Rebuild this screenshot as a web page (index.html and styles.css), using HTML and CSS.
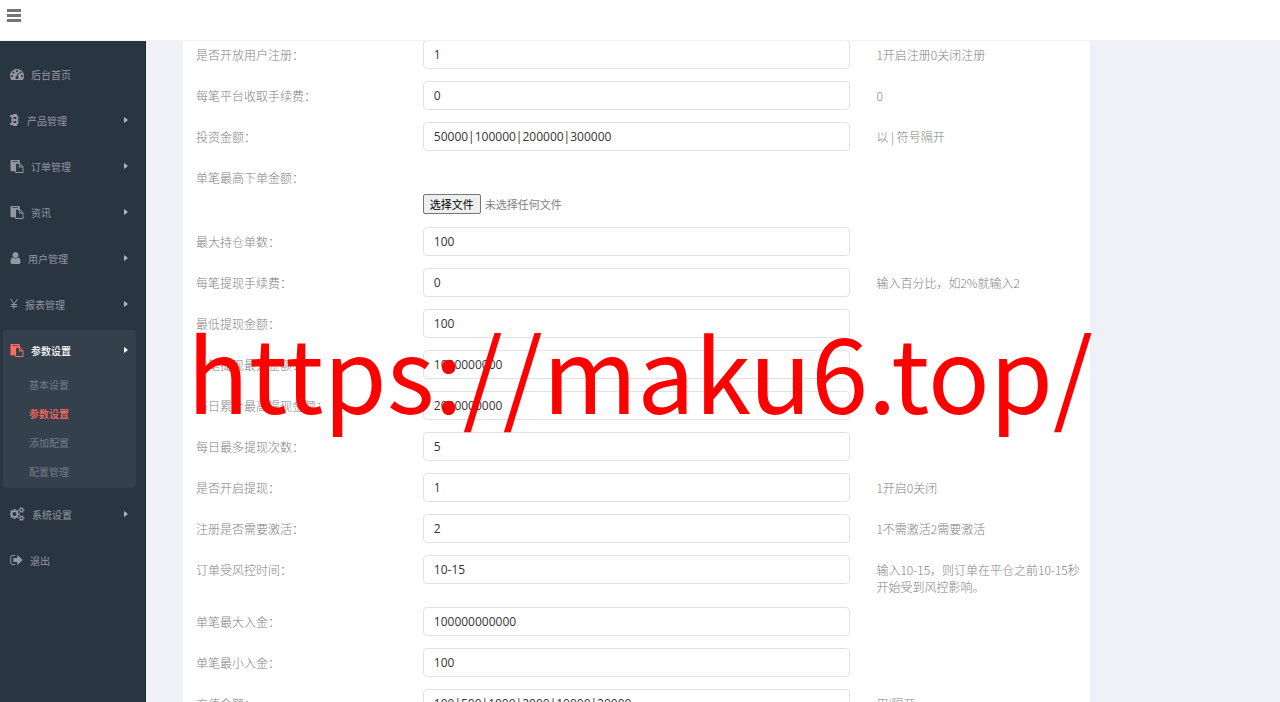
FILE: index.html
```html
<!DOCTYPE html>
<html lang="zh-CN">
<head>
    <meta charset="UTF-8">
    <meta name="viewport" content="width=device-width, initial-scale=1.0">
    <title>参数设置</title>
    <link rel="stylesheet" href="styles.css">
</head>
<body>
    <!-- 图标 -->
    <svg class="sprite" width="0" height="0">
        <symbol id="i-paste" viewBox="0 0 1792 1792"><path d="M768 1664h896v-640h-416q-40 0-68-28t-28-68v-416h-384v1152zm256-1440v-64q0-13-9.5-22.5t-22.5-9.5h-704q-13 0-22.5 9.5t-9.5 22.5v64q0 13 9.5 22.5t22.5 9.5h704q13 0 22.5-9.5t9.5-22.5zm256 672h299l-299-299v299zm512 128v672q0 40-28 68t-68 28h-960q-40 0-68-28t-28-68v-160h-544q-40 0-68-28t-28-68v-1344q0-40 28-68t68-28h1088q40 0 68 28t28 68v328q21 13 36 28l408 408q28 28 48 76t20 88z"/></symbol>
    </svg>

    <header class="header">
        <button class="toggle" type="button" aria-label="菜单">
            <svg width="14" height="13" viewBox="0 0 14 13"><path d="M0 0h14v3H0zM0 5h14v3H0zM0 10h14v3H0z"/></svg>
        </button>
    </header>

    <div class="container">
        <aside class="sidebar">
            <ul class="menu">
                <li>
                    <a class="item" href="#">
                        <svg class="icon" width="14" height="14" viewBox="0 0 1792 1792"><path d="M384 1152q0-53-37.5-90.5t-90.5-37.5-90.5 37.5-37.5 90.5 37.5 90.5 90.5 37.5 90.5-37.5 37.5-90.5zm192-448q0-53-37.5-90.5t-90.5-37.5-90.5 37.5-37.5 90.5 37.5 90.5 90.5 37.5 90.5-37.5 37.5-90.5zm428 481l101-382q6-26-7.5-48.5t-38.5-29.5-48 6.5-30 39.5l-101 382q-60 5-107 43.5t-63 98.5q-20 77 20 146t117 89 146-20 89-117q16-60-6-117t-72-91zm660-33q0-53-37.5-90.5t-90.5-37.5-90.5 37.5-37.5 90.5 37.5 90.5 90.5 37.5 90.5-37.5 37.5-90.5zm-640-640q0-53-37.5-90.5t-90.5-37.5-90.5 37.5-37.5 90.5 37.5 90.5 90.5 37.5 90.5-37.5 37.5-90.5zm448 192q0-53-37.5-90.5t-90.5-37.5-90.5 37.5-37.5 90.5 37.5 90.5 90.5 37.5 90.5-37.5 37.5-90.5zm320 448q0 261-141 483-19 29-54 29h-1402q-35 0-54-29-141-221-141-483 0-182 71-348t191-286 286-191 348-71 348 71 286 191 191 286 71 348z"/></svg>
                        <span>后台首页</span>
                    </a>
                </li>
                <li>
                    <a class="item" href="#">
                        <svg class="icon line" width="10" height="12" viewBox="0 0 10 12"><path d="M0 2h5.5a2 2 0 0 1 0 4H3M5.5 6a2 2 0 0 1 0 4H0M2.500 2v8M4 0v2M6 0v2M4 10v2M6 10v2"/></svg>
                        <span>产品管理</span>
                        <i class="arrow"></i>
                    </a>
                </li>
                <li>
                    <a class="item" href="#">
                        <svg class="icon" width="14" height="13"><use href="#i-paste"/></svg>
                        <span>订单管理</span>
                        <i class="arrow"></i>
                    </a>
                </li>
                <li>
                    <a class="item" href="#">
                        <svg class="icon" width="14" height="13"><use href="#i-paste"/></svg>
                        <span>资讯</span>
                        <i class="arrow"></i>
                    </a>
                </li>
                <li>
                    <a class="item" href="#">
                        <svg class="icon" width="11" height="14" viewBox="192 0 1408 1792"><path d="M1536 1399q0 109-62.500 187t-150.500 78h-854q-88 0-150.500-78t-62.500-187q0-85 8.500-160.500t31.500-152 58.500-131 94-89 134.500-34.500q131 128 313 128t313-128q76 0 134.500 34.500t94 89 58.500 131 31.500 152 8.500 160.500zm-256-887q0 159-112.500 271.500t-271.500 112.500-271.500-112.500-112.500-271.500 112.500-271.500 271.500-112.500 271.500 112.500 112.500 271.500z"/></svg>
                        <span>用户管理</span>
                        <i class="arrow"></i>
                    </a>
                </li>
                <li>
                    <a class="item" href="#">
                        <svg class="icon line yen" width="8" height="10" viewBox="0 0 8 10"><path d="M.6 0L4 5 7.400 0M4 5v5M1 5.500h6M1 7.500h6"/></svg>
                        <span>报表管理</span>
                        <i class="arrow"></i>
                    </a>
                </li>
                <li class="active">
                    <a class="item" href="#">
                        <svg class="icon" width="14" height="13"><use href="#i-paste"/></svg>
                        <span>参数设置</span>
                        <i class="arrow"></i>
                    </a>
                    <ul class="sub">
                        <li><a href="#">基本设置</a></li>
                        <li><a class="current" href="#">参数设置</a></li>
                        <li><a href="#">添加配置</a></li>
                        <li><a href="#">配置管理</a></li>
                    </ul>
                </li>
                <li>
                    <a class="item" href="#">
                        <svg class="icon" width="15" height="14" viewBox="0 0 1920 1792"><path d="M832 896q0-106-75-181t-181-75-181 75-75 181 75 181 181 75 181-75 75-181zm768 512q0-52-38-90t-90-38-90 38-38 90q0 53 37.500 90.500t90.500 37.500 90.500-37.500 37.500-90.500zm0-1024q0-52-38-90t-90-38-90 38-38 90q0 53 37.500 90.500t90.500 37.500 90.500-37.500 37.500-90.500zm-384 421v185q0 10-7 19.500t-16 10.500l-155 24q-11 35-32 76 34 48 90 115 7 11 7 20 0 12-7 19-23 30-82.500 89.500t-78.500 59.500q-11 0-21-7l-115-90q-37 19-77 31-11 108-23 155-7 24-30 24h-186q-11 0-20-7.500t-10-17.500l-23-153q-34-10-75-31l-118 89q-7 7-20 7-11 0-21-8-144-133-144-160 0-9 7-19 10-14 41-53t47-61q-23-44-35-82l-152-24q-10-1-17-9.500t-7-19.500v-185q0-10 7-19.500t16-10.500l155-24q11-35 32-76-34-48-90-115-7-11-7-20 0-12 7-20 22-30 82-89t79-59q11 0 21 7l115 90q34-18 77-32 11-108 23-154 7-24 30-24h186q11 0 20 7.500t10 17.500l23 153q34 10 75 31l118-89q8-7 20-7 11 0 21 8 144 133 144 160 0 8-7 19-12 16-42 54t-45 60q23 48 34 82l152 23q10 2 17 10.500t7 19.500zm640 533v140q0 16-149 31-12 27-30 52 51 113 51 138 0 4-4 7-122 71-124 71-8 0-46-47t-52-68q-20 2-30 2t-30-2q-14 21-52 68t-46 47q-2 0-124-71-4-3-4-7 0-25 51-138-18-25-30-52-149-15-149-31v-140q0-16 149-31 13-29 30-52-51-113-51-138 0-4 4-7 4-2 35-20t59-34 30-16q8 0 46 46.500t52 67.500q20-2 30-2t30 2q51-71 92-112l6-2q4 0 124 70 4 3 4 7 0 25-51 138 17 23 30 52 149 15 149 31zm0-1024v140q0 16-149 31-12 27-30 52 51 113 51 138 0 4-4 7-122 71-124 71-8 0-46-47t-52-68q-20 2-30 2t-30-2q-14 21-52 68t-46 47q-2 0-124-71-4-3-4-7 0-25 51-138-18-25-30-52-149-15-149-31v-140q0-16 149-31 13-29 30-52-51-113-51-138 0-4 4-7 4-2 35-20t59-34 30-16q8 0 46 46.500t52 67.500q20-2 30-2t30 2q51-71 92-112l6-2q4 0 124 70 4 3 4 7 0 25-51 138 17 23 30 52 149 15 149 31z"/></svg>
                        <span>系统设置</span>
                        <i class="arrow"></i>
                    </a>
                </li>
                <li>
                    <a class="item" href="#">
                        <svg class="icon" width="13" height="14" viewBox="64 0 1600 1792"><path d="M704 1440q0 4 1 20t.5 26.500-3 23.500-10 19.500-20.500 6.500h-320q-119 0-203.500-84.500t-84.500-203.500v-704q0-119 84.500-203.500t203.500-84.500h320q13 0 22.500 9.500t9.500 22.500q0 4 1 20t.5 26.500-3 23.500-10 19.500-20.500 6.500h-320q-66 0-113 47t-47 113v704q0 66 47 113t113 47h312l11.500 1 11.500 3 8 5.500 7 9 2 13.500zm928-544q0 26-19 45l-544 544q-19 19-45 19t-45-19-19-45v-288h-448q-26 0-45-19t-19-45v-384q0-26 19-45t45-19h448v-288q0-26 19-45t45-19 45 19l544 544q19 19 19 45z"/></svg>
                        <span>退出</span>
                    </a>
                </li>
            </ul>
        </aside>

        <main class="main">
            <form class="panel">
                <div class="row">
                    <label for="reg">是否开放用户注册：</label>
                    <div class="field"><input type="text" id="reg" value="1"></div>
                    <p class="hint">1开启注册0关闭注册</p>
                </div>
                <div class="row">
                    <label for="fee">每笔平台收取手续费：</label>
                    <div class="field"><input type="text" id="fee" value="0"></div>
                    <p class="hint">0</p>
                </div>
                <div class="row">
                    <label for="invest">投资金额：</label>
                    <div class="field"><input type="text" id="invest" value="50000|100000|200000|300000"></div>
                    <p class="hint">以 | 符号隔开</p>
                </div>
                <div class="row">
                    <label for="file">单笔最高下单金额：</label>
                    <div class="field upload">
                        <input type="file" id="file" hidden>
                        <button type="button" class="file-btn" onclick="document.getElementById('file').click()">选择文件</button>
                        <span>未选择任何文件</span>
                    </div>
                </div>
                <div class="row">
                    <label for="hold">最大持仓单数：</label>
                    <div class="field"><input type="text" id="hold" value="100"></div>
                </div>
                <div class="row">
                    <label for="cash-fee">每笔提现手续费：</label>
                    <div class="field"><input type="text" id="cash-fee" value="0"></div>
                    <p class="hint">输入百分比，如2%就输入2</p>
                </div>
                <div class="row">
                    <label for="cash-min">最低提现金额：</label>
                    <div class="field"><input type="text" id="cash-min" value="100"></div>
                </div>
                <div class="row">
                    <label for="cash-max">单笔提现最大金额：</label>
                    <div class="field"><input type="text" id="cash-max" value="1000000000"></div>
                </div>
                <div class="row">
                    <label for="day-max">每日累计最高提现金额：</label>
                    <div class="field"><input type="text" id="day-max" value="2000000000"></div>
                </div>
                <div class="row">
                    <label for="day-num">每日最多提现次数：</label>
                    <div class="field"><input type="text" id="day-num" value="5"></div>
                </div>
                <div class="row">
                    <label for="cash-open">是否开启提现：</label>
                    <div class="field"><input type="text" id="cash-open" value="1"></div>
                    <p class="hint">1开启0关闭</p>
                </div>
                <div class="row">
                    <label for="activate">注册是否需要激活：</label>
                    <div class="field"><input type="text" id="activate" value="2"></div>
                    <p class="hint">1不需激活2需要激活</p>
                </div>
                <div class="row">
                    <label for="risk">订单受风控时间：</label>
                    <div class="field"><input type="text" id="risk" value="10-15"></div>
                    <p class="hint">输入10-15，则订单在平仓之前10-15秒开始受到风控影响。</p>
                </div>
                <div class="row">
                    <label for="in-max">单笔最大入金：</label>
                    <div class="field"><input type="text" id="in-max" value="100000000000"></div>
                </div>
                <div class="row">
                    <label for="in-min">单笔最小入金：</label>
                    <div class="field"><input type="text" id="in-min" value="100"></div>
                </div>
                <div class="row">
                    <label for="recharge">充值金额：</label>
                    <div class="field"><input type="text" id="recharge" value="100|500|1000|2000|10000|20000"></div>
                    <p class="hint">用|隔开</p>
                </div>
            </form>
        </main>
    </div>

    <div class="watermark">https://maku6.top/</div>
</body>
</html>
```

FILE: styles.css
```css
* {
    box-sizing: border-box;
}

body {
    height: 100vh;
    margin: 0;
    padding-top: 40px;
    overflow: hidden;
    background: #f0f1f7;
    color: #808085;
    font-family: "Noto Sans CJK SC", sans-serif;
    font-size: 12px;
    font-weight: 300;
    line-height: 17px;
}

ul {
    margin: 0;
    padding: 0;
    list-style: none;
}

a {
    color: inherit;
    text-decoration: none;
}

.sprite {
    position: absolute;
}

/* 顶部 */
.header {
    position: fixed;
    top: 0;
    left: 0;
    right: 0;
    z-index: 2;
    height: 41px;
    padding: 9px 7px;
    background: #fff;
    border-bottom: 1px solid #f1f2f7;
}

.toggle {
    display: block;
    padding: 0;
    border: 0;
    background: none;
    cursor: pointer;
}

.toggle svg {
    display: block;
    fill: #757575;
}

/* 左侧菜单 */
.container {
    display: flex;
    height: 100%;
}

.sidebar {
    flex: none;
    width: 146px;
    padding: 14px 9px 0 3px;
    background: #2a3542;
    border-right: 1px solid #1f2738;
    color: #9297a0;
    font-size: 10px;
    font-weight: 400;
}

.menu {
    display: flex;
    flex-direction: column;
    gap: 6px;
}

.item {
    display: flex;
    align-items: center;
    gap: 7px;
    height: 40px;
    padding: 0 8px 0 7px;
}

.icon {
    flex: none;
    fill: currentColor;
}

.line {
    fill: none;
    stroke: currentColor;
    stroke-width: 2;
}

.yen {
    stroke-width: 1;
}

.arrow {
    margin-left: auto;
    border: 3px solid transparent;
    border-left: 4px solid #b4b8be;
    border-right: 0;
}

.active {
    border-radius: 4px;
    background: #35404d;
}

.active .item {
    color: #fff;
    font-weight: 500;
}

.active .icon {
    color: #ff6c60;
}

.active .arrow {
    border-left-color: #fff;
}

.sub {
    padding-bottom: 2px;
    color: #737b85;
}

.sub a {
    display: block;
    padding: 0 26px;
    line-height: 29px;
}

.sub .current {
    color: #ff6c60;
    font-weight: 500;
}

/* 表单 */
.main {
    flex: 1;
    overflow: hidden;
}

.panel {
    width: 80%;
    margin-left: 37px;
    background: #fff;
}

.row {
    display: grid;
    grid-template-columns: 3fr 6fr 3fr;
    align-items: start;
    padding-bottom: 12px;
}

.row label,
.row .hint {
    margin: 0;
    padding: 6px 0 0 13px;
}

.field {
    padding: 0 13px;
}

.field input {
    display: block;
    width: 100%;
    height: 29px;
    padding: 0 10px;
    border: 1px solid #e2e2e4;
    border-radius: 4px;
    background: #fff;
    color: #333;
    font-family: "Open Sans", "Noto Sans CJK SC", sans-serif;
    font-size: 12px;
}

.field input[hidden] {
    display: none;
}

.upload {
    display: flex;
    align-items: center;
    gap: 4px;
    padding-top: 31px;
    padding-bottom: 1px;
    font-size: 11px;
    font-weight: 400;
}

.file-btn {
    height: 20px;
    padding: 0 6px;
    border: 1px solid #767676;
    border-radius: 2px;
    background: #efefef;
    color: #000;
    font: inherit;
    line-height: 16px;
}

/* 水印 */
.watermark {
    position: fixed;
    top: 50%;
    left: 50%;
    z-index: 3;
    padding-top: 38px;
    transform: translate(-50%, -50%);
    color: #f00;
    font-size: 102px;
    font-weight: 400;
    line-height: 1;
    white-space: nowrap;
    pointer-events: none;
}
```
